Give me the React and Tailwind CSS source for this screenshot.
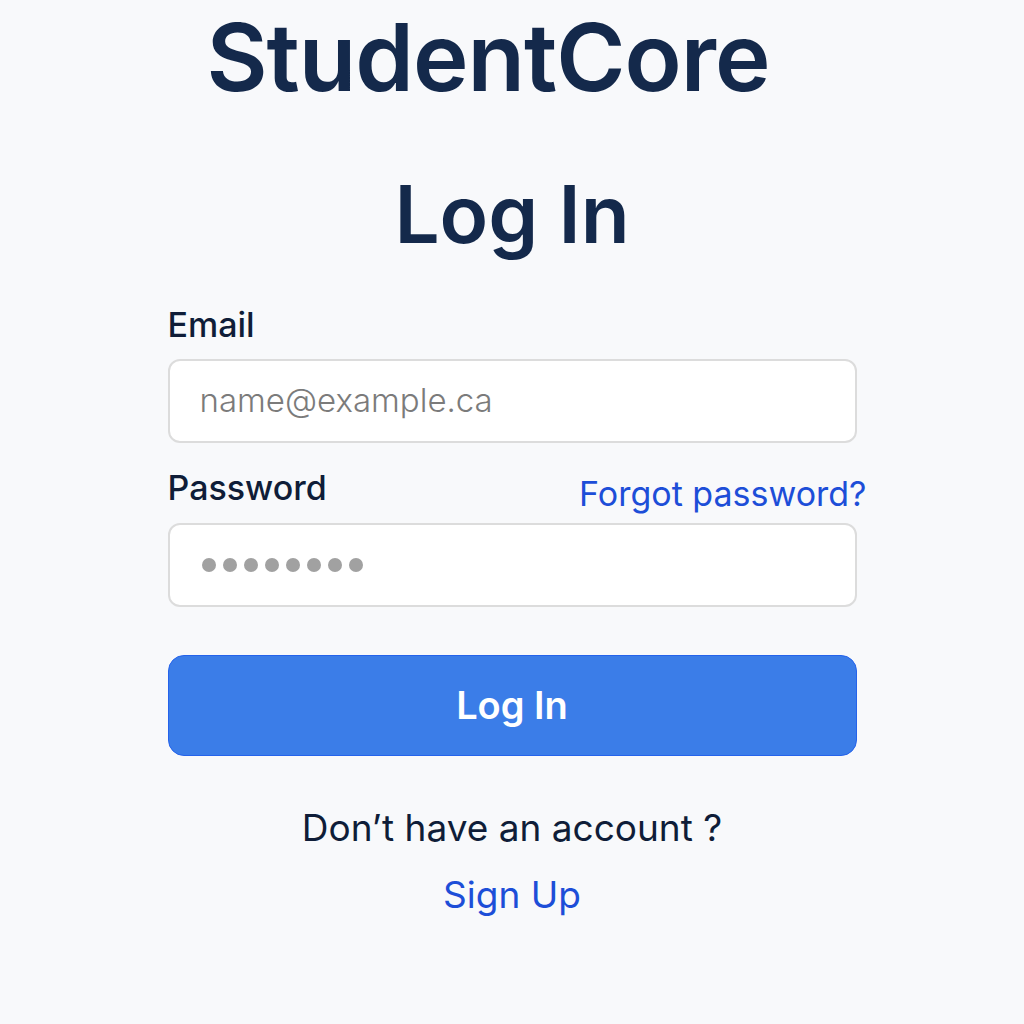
export default function App() {
  return (
    <div
      className="w-[1024px] h-[1024px] bg-[#f8f9fb] flex flex-col items-center overflow-hidden"
      style={{ fontFamily: "Inter, 'Noto Sans', sans-serif" }}
    >
      <h1 className="pt-[2px] pr-[48px] text-[94px] leading-[110px] font-semibold text-[#14294b] tracking-[-1px]">
        StudentCore
      </h1>
      <h2 className="mt-[54px] text-[80px] leading-[96px] font-semibold text-[#14294b]">
        Log In
      </h2>
      <form className="mt-[42px] w-[689px] flex flex-col">
        <label className="text-[34px] leading-[42px] font-medium text-[#0f1d38]">Email</label>
        <div className="mt-[13px] h-[84px] bg-white border-2 border-[#dcdcdc] rounded-[12px] flex items-center px-[30px]">
          <span className="text-[33px] text-[#7b7b7b] font-light">name@example.ca</span>
        </div>
        <div className="mt-[24px] flex justify-between items-end">
          <label className="text-[34px] leading-[42px] font-medium text-[#0f1d38]">Password</label>
          <a className="mr-[-10px] mb-[-6px] text-[34px] leading-[42px] text-[#1d4ed8]">Forgot password?</a>
        </div>
        <div className="mt-[14px] h-[84px] bg-white border-2 border-[#dcdcdc] rounded-[12px] flex items-center px-[32px] gap-[7px]">
          {[0, 1, 2, 3, 4, 5, 6, 7].map((i) => (
            <span key={i} className="w-[14px] h-[14px] rounded-full bg-[#a1a1a1]" />
          ))}
        </div>
        <button
          type="button"
          className="mt-[48px] h-[101px] bg-[#3b7de8] border border-[#2563eb] rounded-[16px] text-white text-[38px] font-semibold"
        >
          Log In
        </button>
      </form>
      <p className="mt-[49px] text-[37px] leading-[46px] text-[#0f1d38]">Don’t have an account ?</p>
      <a className="mt-[21px] text-[37px] leading-[46px] text-[#1d4ed8]">Sign Up</a>
    </div>
  );
}
